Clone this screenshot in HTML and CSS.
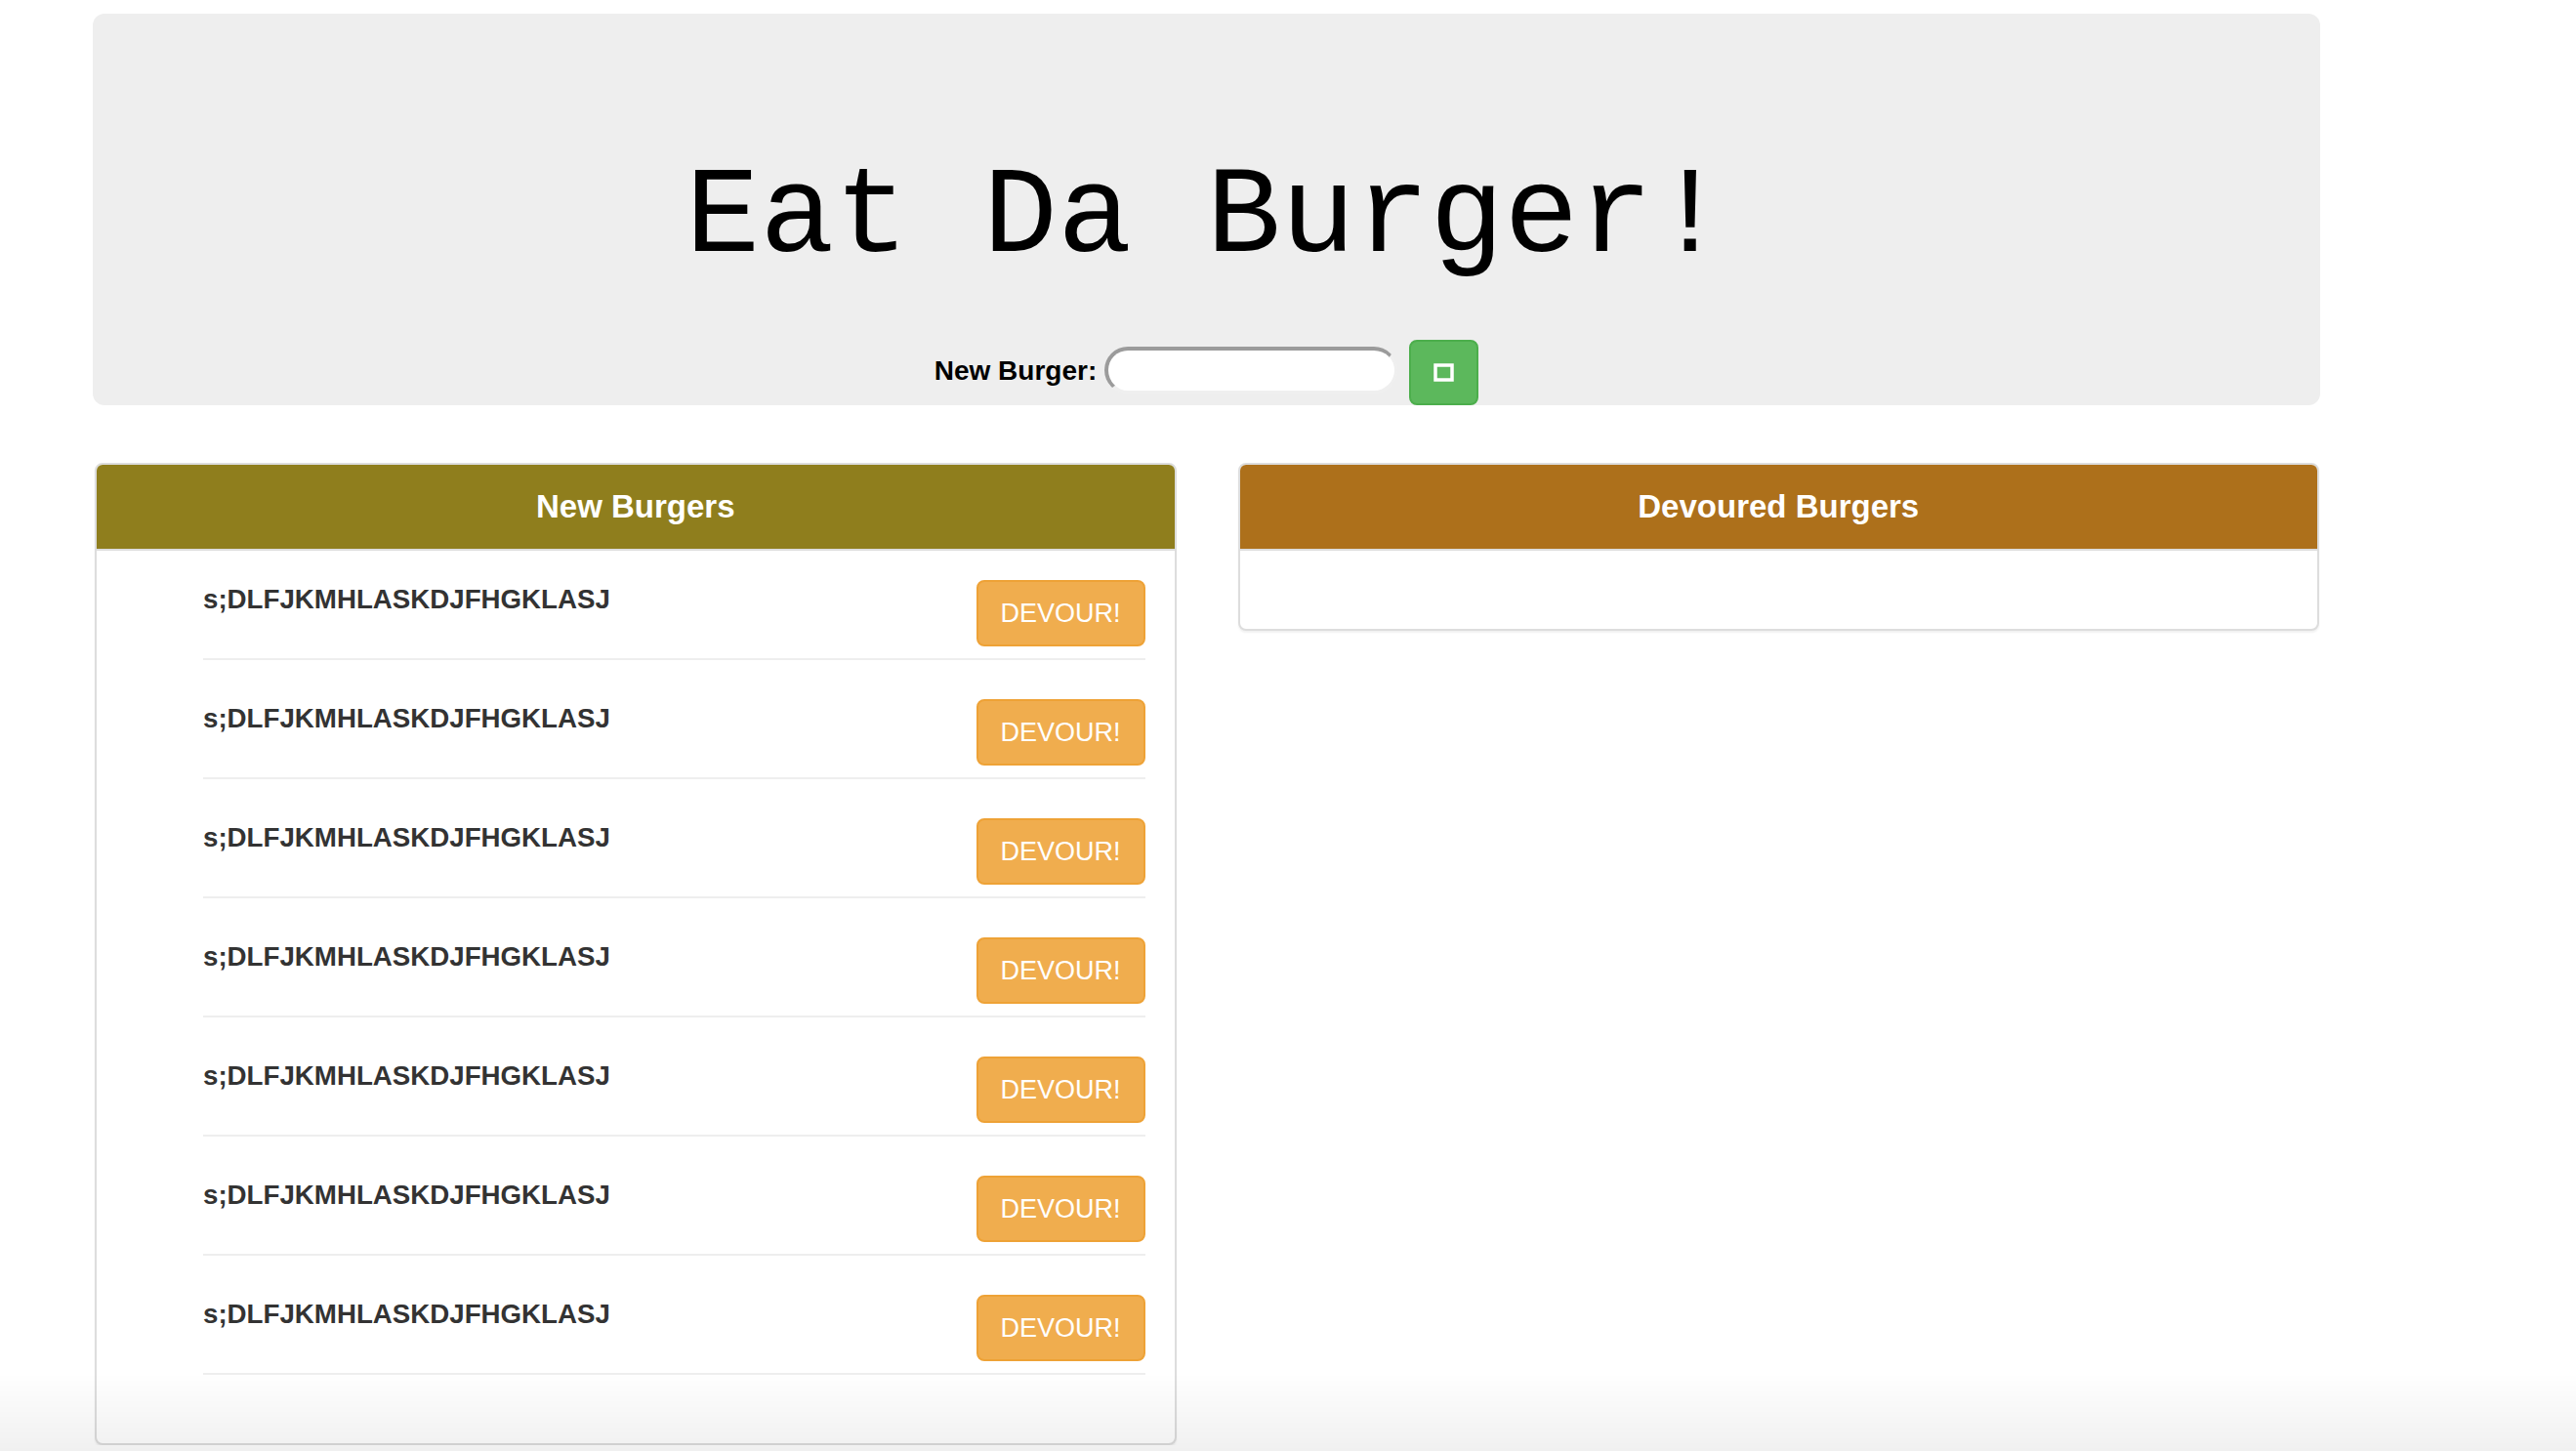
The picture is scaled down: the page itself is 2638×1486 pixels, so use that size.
FILE: index.html
```html
<!DOCTYPE html>
<html>
<head>
<meta charset="utf-8">
<title>Eat Da Burger!</title>
<link rel="stylesheet" href="styles.css">
</head>
<body>
<div class="container">
  <header class="jumbotron">
    <h1 class="title">Eat Da Burger!</h1>
    <form class="add-form">
      <label class="add-label" for="burger">New Burger:</label>
      <input class="add-input" id="burger" type="text">
      <button class="add-btn" type="button" aria-label="Add">
        <svg width="21" height="19" viewBox="0 0 21 19"><rect x="2" y="2" width="17" height="15" fill="none" stroke="#fff" stroke-width="3.5"/></svg>
      </button>
    </form>
  </header>

  <div class="panels">
    <section class="panel">
      <div class="panel-heading heading-new">New Burgers</div>
      <div class="panel-body">
        <ul class="burger-list">
          <li class="burger"><span class="burger-name">s;DLFJKMHLASKDJFHGKLASJ</span><button class="devour" type="button">DEVOUR!</button></li>
          <li class="burger"><span class="burger-name">s;DLFJKMHLASKDJFHGKLASJ</span><button class="devour" type="button">DEVOUR!</button></li>
          <li class="burger"><span class="burger-name">s;DLFJKMHLASKDJFHGKLASJ</span><button class="devour" type="button">DEVOUR!</button></li>
          <li class="burger"><span class="burger-name">s;DLFJKMHLASKDJFHGKLASJ</span><button class="devour" type="button">DEVOUR!</button></li>
          <li class="burger"><span class="burger-name">s;DLFJKMHLASKDJFHGKLASJ</span><button class="devour" type="button">DEVOUR!</button></li>
          <li class="burger"><span class="burger-name">s;DLFJKMHLASKDJFHGKLASJ</span><button class="devour" type="button">DEVOUR!</button></li>
          <li class="burger"><span class="burger-name">s;DLFJKMHLASKDJFHGKLASJ</span><button class="devour" type="button">DEVOUR!</button></li>
        </ul>
      </div>
    </section>
    <section class="panel">
      <div class="panel-heading heading-devoured">Devoured Burgers</div>
      <div class="panel-body">
        <ul class="burger-list"></ul>
      </div>
    </section>
  </div>
</div>
<div class="bottom-fade"></div>
</body>
</html>
```

FILE: styles.css
```css
html, body {
  margin: 0;
  padding: 0;
  background: #fff;
}

body {
  font-family: "Liberation Sans", Arial, Helvetica, sans-serif;
  color: #333;
  font-size: 28px;
  line-height: 1.42857;
}

.container {
  width: 2281px;
  margin-left: 95px;
  padding-top: 14px;
}

.jumbotron {
  background: #eeeeee;
  border-radius: 12px;
  padding-top: 139px;
  text-align: center;
}

.title {
  margin: 0;
  font-family: "Courier New", "Liberation Mono", monospace;
  font-weight: normal;
  font-size: 127px;
  line-height: 140px;
  color: #000;
}

.add-form {
  display: flex;
  justify-content: center;
  align-items: center;
  margin-top: 55px;
  margin-bottom: -2px;
  height: 67px;
}

.add-label {
  font-weight: bold;
  font-size: 28px;
  color: #000;
  margin-right: 8px;
  position: relative;
  top: -2px;
}

.add-input {
  box-sizing: border-box;
  width: 300px;
  height: 48px;
  border-radius: 24px;
  border-style: solid;
  border-width: 4px 3px 3px 4px;
  border-color: #9b9b9b #efefef #efefef #9b9b9b;
  background: #fff;
  margin-right: 12px;
  outline: none;
  position: relative;
  top: -3px;
}

.add-btn {
  box-sizing: border-box;
  width: 71px;
  height: 67px;
  background: #5cb85c;
  border: 2px solid #4cae4c;
  border-radius: 8px;
  display: flex;
  align-items: center;
  justify-content: center;
  padding: 0;
}

.add-btn svg {
  display: block;
}

.panels {
  display: grid;
  grid-template-columns: 1fr 1fr;
  column-gap: 63px;
  align-items: start;
  margin: 61px 1px 0 2px;
}

.panel {
  border: 2px solid #dddddd;
  border-radius: 8px;
  background: #fff;
  box-shadow: 0 2px 2px rgba(0, 0, 0, 0.06);
  overflow: hidden;
}

.panel-heading {
  height: 86px;
  border-bottom: 2px solid #dddddd;
  display: flex;
  align-items: center;
  justify-content: center;
  color: #fff;
  font-weight: bold;
  font-size: 33px;
}

.heading-new {
  background: #8f7e1d;
}

.heading-devoured {
  background: #ad701b;
}

.panel-body {
  padding: 30px;
}

.burger-list {
  list-style: none;
  margin: 0 0 20px;
  padding: 0 0 0 79px;
}

.burger {
  display: flex;
  justify-content: space-between;
  align-items: flex-start;
  padding-bottom: 12px;
  border-bottom: 2px solid #eeeeee;
  margin-bottom: 40px;
}

.burger-name {
  font-weight: bold;
  font-size: 27.7px;
  line-height: 40px;
  color: #333;
}

.devour {
  box-sizing: border-box;
  height: 68px;
  width: 173px;
  padding: 0;
  background: #f0ad4e;
  border: 2px solid #eea236;
  border-radius: 8px;
  color: #fff;
  font-family: "Liberation Sans", Arial, Helvetica, sans-serif;
  font-size: 27px;
  line-height: 40px;
}

.bottom-fade {
  position: fixed;
  left: 0;
  right: 0;
  bottom: 0;
  height: 80px;
  background: linear-gradient(to bottom, rgba(0, 0, 0, 0), rgba(0, 0, 0, 0.06));
  pointer-events: none;
}
```
